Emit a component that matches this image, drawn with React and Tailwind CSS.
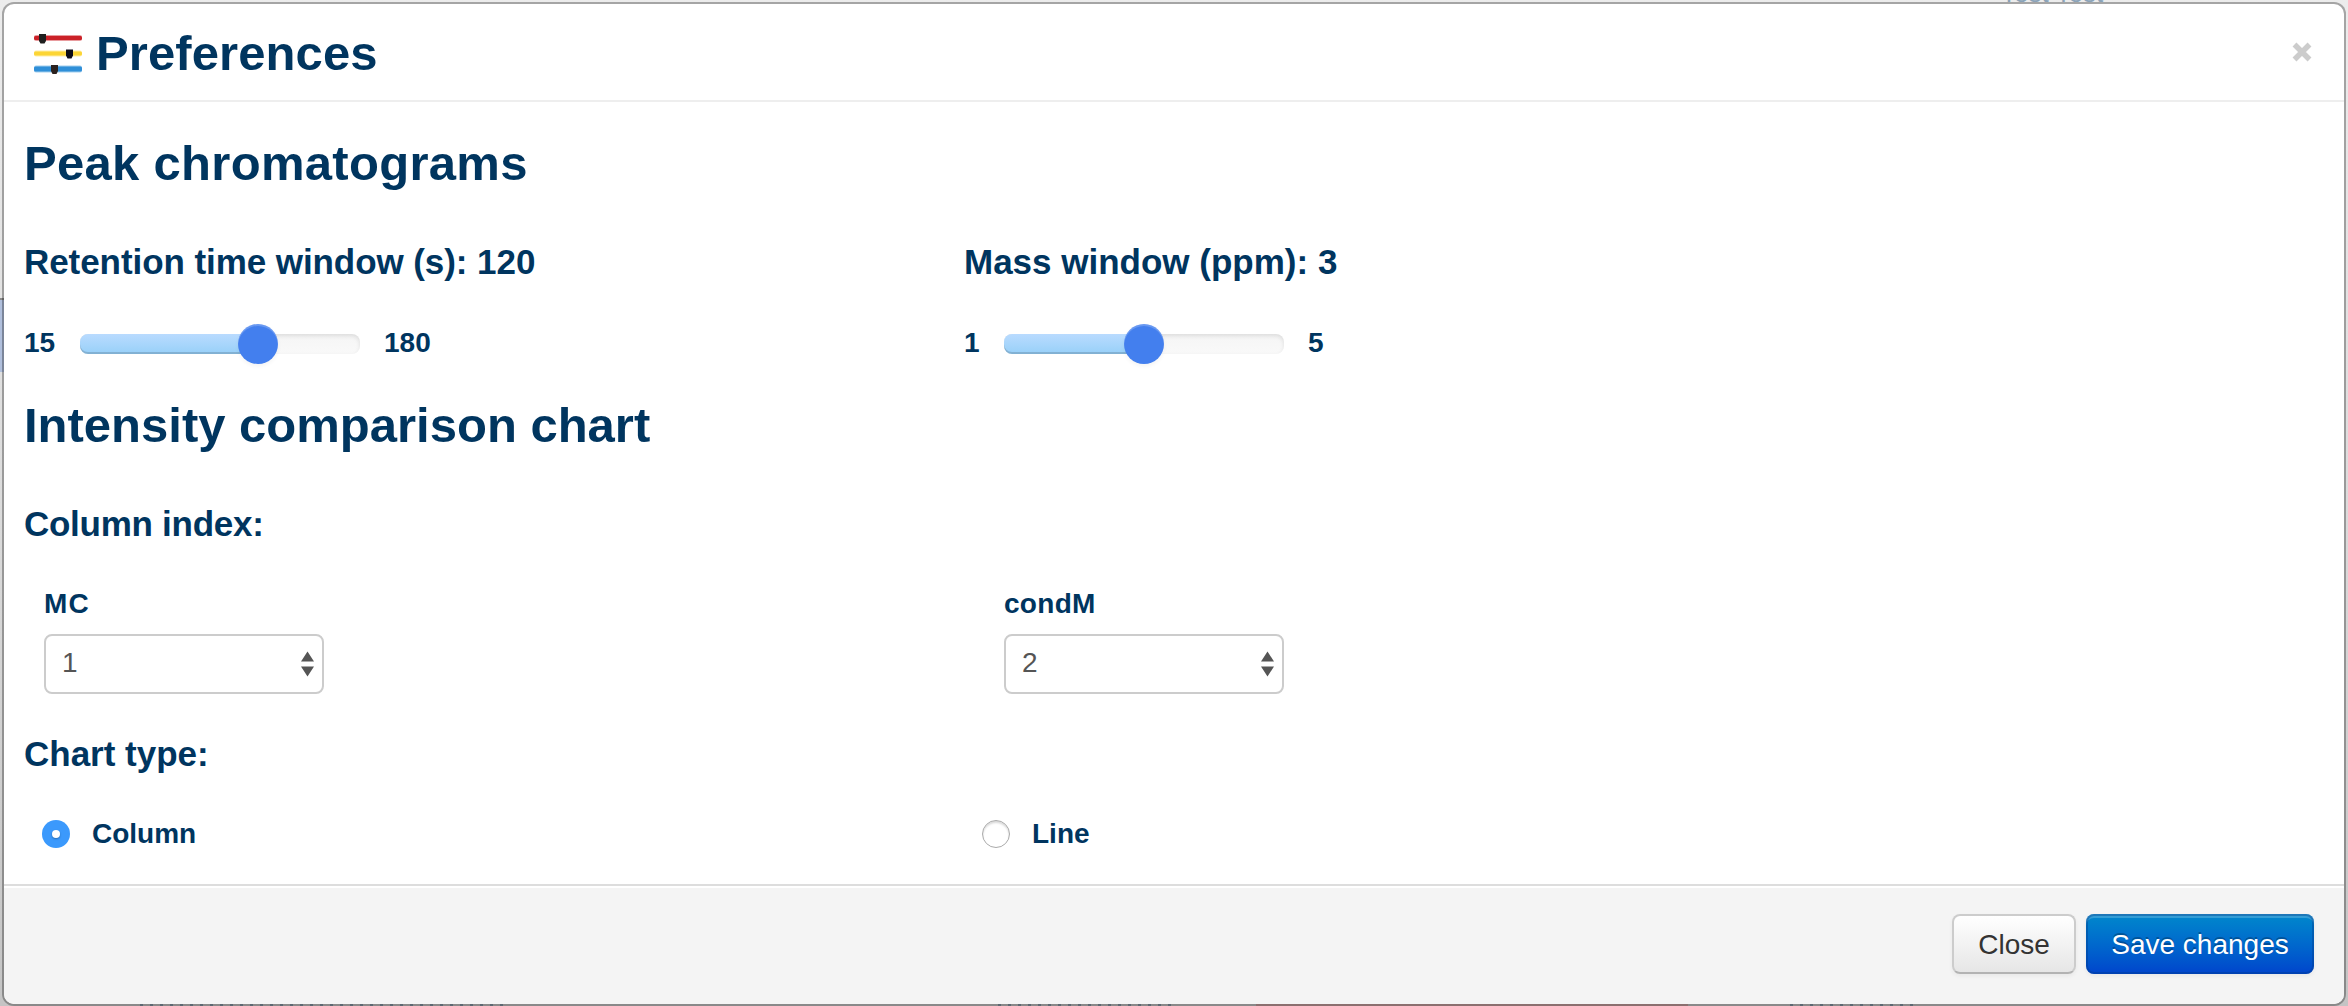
function PreferencesIcon() {
  return (
    <svg width="48" height="40" viewBox="0 0 48 40" className="mt-1 shrink-0">
      <rect x="0" y="1" width="48" height="6" rx="2" fill="#cb2128" fillOpacity="0.45" />
      <rect x="0" y="2" width="48" height="4" rx="1.500" fill="#cb2128" />
      <rect x="0" y="16.500" width="48" height="6" rx="2" fill="#fcd535" fillOpacity="0.45" />
      <rect x="0" y="17.500" width="48" height="4" rx="1.500" fill="#fcd535" />
      <rect x="0" y="31.500" width="48" height="7" rx="2" fill="#2f8fd8" fillOpacity="0.45" />
      <rect x="0" y="32.500" width="48" height="5" rx="1.500" fill="#2f8fd8" />
      <path d="M5 0H12V7L10.500 9.500H6.500L5 7Z" fill="#1f1f1f" />
      <path d="M32 15.500H39V21.500L37.500 24.500H33.500L32 21.500Z" fill="#0c0c18" />
      <path d="M17 31H24V37L22.500 40H18.500L17 37Z" fill="#2b211e" />
    </svg>
  );
}

function Slider({ min, max, minWidth, percent, label }) {
  return (
    <div className="mt-[22px] flex h-10 items-center gap-6 text-[28px] leading-[40px] font-bold">
      <span className={`-mt-0.5 ${minWidth}`}>{min}</span>
      <div
        role="slider"
        aria-label={label}
        aria-valuenow={percent}
        className="relative h-5 w-[280px] rounded-lg bg-linear-to-b from-[#f5f5f5] to-[#f9f9f9] shadow-[inset_0_2px_4px_rgba(0,0,0,0.1)]"
      >
        <div
          className="h-5 rounded-lg bg-linear-to-b from-[#b9dbff] to-[#97d0f8] shadow-[inset_0_-2px_0_rgba(0,0,0,0.15)]"
          style={{ width: `${percent}%` }}
        />
        <div
          className="absolute -top-2.5 -ml-5 size-10 rounded-full bg-[#437fee] shadow-[inset_0_2px_0_rgba(255,255,255,0.2),0_2px_4px_rgba(0,0,0,0.05)]"
          style={{ left: `${percent}%` }}
        />
      </div>
      <span className="-mt-0.5">{max}</span>
    </div>
  );
}

function SelectField({ label, value, tracking }) {
  return (
    <div>
      <div className={`text-[28px] leading-[40px] font-bold ${tracking}`}>{label}</div>
      <div className="mt-2.5 flex h-[60px] w-[280px] items-center justify-between rounded-lg border-2 border-[#ccc] bg-white pr-2 pl-4 text-[28px] text-[#555]">
        <span className="-mt-0.5">{value}</span>
        <svg width="13" height="26" viewBox="0 0 13 26" fill="#555">
          <path d="M6.500 0.500L13 10.500H0ZM0 15.500H13L6.500 25.500Z" />
        </svg>
      </div>
    </div>
  );
}

function Radio({ label, checked }) {
  return (
    <label className="flex h-10 items-center gap-[22px] text-[28px] font-bold">
      {checked ? (
        <span className="flex size-7 items-center justify-center rounded-full bg-[#3b99fc]">
          <span className="size-2 rounded-full bg-white shadow-[0_1px_2px_rgba(0,0,0,0.3)]" />
        </span>
      ) : (
        <span className="size-7 rounded-full border border-[#aaa] bg-white shadow-[inset_0_2px_2px_rgba(0,0,0,0.15)]" />
      )}
      <span>{label}</span>
    </label>
  );
}

/* Slivers of the dimmed page that stay visible around the dialog. */
function PageBehind() {
  return (
    <div aria-hidden="true" className="absolute inset-0 overflow-hidden bg-linear-to-b from-[#ececec] via-[#dcdcdc] to-[#c4c4c4]">
      <div className="absolute top-[298px] left-0 h-[74px] w-1 border-t-2 border-[#8a8a8a] bg-[#b0bfdc]" />
      <div className="absolute -top-5 left-[2001px] text-[26px] leading-[26px] text-[#8ba3b8]">Test Test</div>
      <div className="absolute top-[1004px] left-[140px] h-0.5 w-[364px] bg-[repeating-linear-gradient(90deg,#8595a4_0_3px,transparent_3px_10px)]" />
      <div className="absolute top-[1004px] left-[998px] h-0.5 w-[174px] bg-[repeating-linear-gradient(90deg,#8595a4_0_3px,transparent_3px_10px)]" />
      <div className="absolute top-[1004px] left-[1256px] h-0.5 w-[432px] bg-[#c8a0a0]" />
      <div className="absolute top-[1004px] left-[1790px] h-0.5 w-[126px] bg-[repeating-linear-gradient(90deg,#8595a4_0_3px,transparent_3px_10px)]" />
    </div>
  );
}

export default function App() {
  return (
    <div className="relative h-[1006px] w-[2348px] overflow-hidden p-0.5 pb-0 font-['Liberation_Sans',Arial,sans-serif]">
      <PageBehind />
      <div
        role="dialog"
        className="relative flex h-[1004px] w-[2344px] flex-col overflow-hidden rounded-xl border-2 border-black/30 bg-white bg-clip-padding text-[#00355f]"
      >
        <header className="flex h-[98px] shrink-0 items-center justify-between border-b-2 border-[#eee] pr-[32px] pl-[30px]">
          <div className="flex items-center gap-3.5">
            <PreferencesIcon />
            <h1 className="mt-0.5 text-[49px] leading-[80px] font-bold tracking-[0.1px]">Preferences</h1>
          </div>
          <svg width="20" height="20" viewBox="0 0 20 20" stroke="#ccc" strokeWidth="5.500" className="-mt-px">
            <path d="M2.500 2.500L17.500 17.500M17.500 2.500L2.500 17.500" />
          </svg>
        </header>
        <main className="h-[782px] shrink-0 px-5 pt-[21px]">
          <h2 className="text-[49px] leading-[80px] font-bold tracking-[0.3px]">Peak chromatograms</h2>
          <div className="mt-[19px] grid grid-cols-[940px_1fr]">
            <h3 className="text-[35px] leading-[80px] font-bold tracking-[-0.07px]">Retention time window (s): 120</h3>
            <h3 className="text-[35px] leading-[80px] font-bold">Mass window (ppm): 3</h3>
            <Slider min="15" max="180" minWidth="w-8" percent={63.6} label="Retention time window" />
            <Slider min="1" max="5" minWidth="w-4" percent={50} label="Mass window" />
          </div>
          <h2 className="mt-[21px] text-[49px] leading-[80px] font-bold">Intensity comparison chart</h2>
          <h3 className="mt-[19px] text-[35px] leading-[80px] font-bold tracking-[-0.27px]">Column index:</h3>
          <div className="mt-5 grid grid-cols-[960px_1fr] pl-5">
            <SelectField label="MC" value="1" tracking="tracking-[1.2px]" />
            <SelectField label="condM" value="2" tracking="tracking-[0.3px]" />
          </div>
          <h3 className="mt-5 text-[35px] leading-[80px] font-bold">Chart type:</h3>
          <div className="mt-5 grid grid-cols-[940px_1fr] pl-[18px]">
            <Radio label="Column" checked />
            <Radio label="Line" />
          </div>
        </main>
        <footer className="flex grow items-start justify-end gap-2.5 border-t-2 border-[#ddd] bg-[#f4f4f4] pt-7 pr-[30px] text-[28px] shadow-[inset_0_2px_0_#fff]">
          <button className="h-[60px] w-[124px] rounded-lg border-2 border-[#ccc] border-b-[#b3b3b3] bg-linear-to-b from-white to-[#e6e6e6] pt-px text-[#333] shadow-[0_2px_4px_rgba(0,0,0,0.05)]">
            Close
          </button>
          <button className="h-[60px] w-[228px] rounded-lg bg-linear-to-b from-[#0088cc] to-[#0044cc] pt-px text-white shadow-[inset_0_0_0_2px_rgba(0,60,140,0.4),inset_0_4px_0_rgba(255,255,255,0.2),0_2px_4px_rgba(0,0,0,0.05)] [text-shadow:0_-2px_0_rgba(0,0,0,0.25)]">
            Save changes
          </button>
        </footer>
      </div>
    </div>
  );
}
